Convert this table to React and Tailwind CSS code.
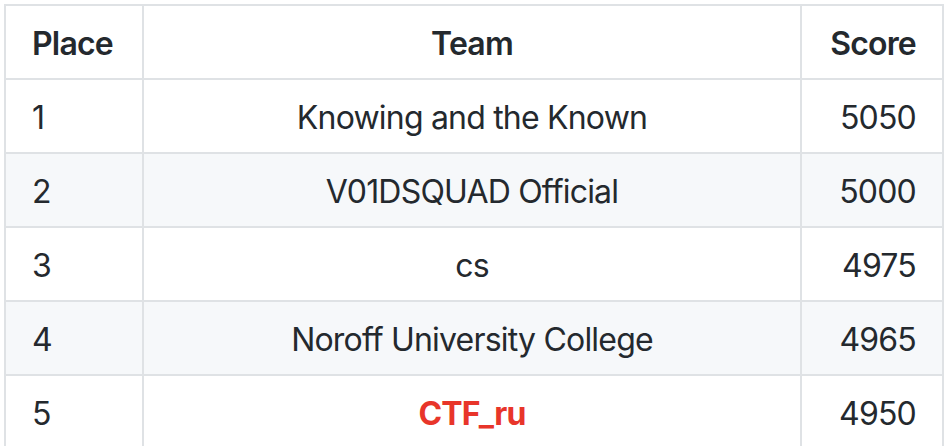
import React from 'react';

const rows = [
  { place: '1', team: 'Knowing and the Known', score: '5050' },
  { place: '2', team: 'V01DSQUAD Official', score: '5000' },
  { place: '3', team: 'cs', score: '4975' },
  { place: '4', team: 'Noroff University College', score: '4965' },
  { place: '5', team: 'CTF_ru', score: '4950', highlight: true },
];

const cell = 'h-[74px] px-[26px] pt-[3px] flex items-center border-r-2 border-b-2 border-[#dfe2e5]';

export default function App() {
  return (
    <div
      className="w-[948px] h-[446px] overflow-hidden bg-white text-[#24292e] text-[32px] leading-[48px] tracking-[-0.8px]"
      style={{ fontFamily: 'Inter, "Liberation Sans", sans-serif' }}
    >
      <div className="ml-[4px] mt-[4px] w-[940px] grid grid-cols-[138px_658px_142px] border-l-2 border-t-2 border-[#dfe2e5]">
        <div className={`${cell} font-semibold`}>Place</div>
        <div className={`${cell} justify-center font-semibold`}>Team</div>
        <div className={`${cell} justify-end font-semibold`}>Score</div>
        {rows.map((r, i) => {
          const bg = i % 2 === 1 ? 'bg-[#f6f8fa]' : 'bg-white';
          return (
            <React.Fragment key={r.place}>
              <div className={`${cell} ${bg}`}>{r.place}</div>
              <div className={`${cell} ${bg} justify-center`}>
                {r.highlight ? (
                  <span className="font-bold text-[#e8352a]">{r.team}</span>
                ) : (
                  r.team
                )}
              </div>
              <div className={`${cell} ${bg} justify-end`}>{r.score}</div>
            </React.Fragment>
          );
        })}
      </div>
    </div>
  );
}
